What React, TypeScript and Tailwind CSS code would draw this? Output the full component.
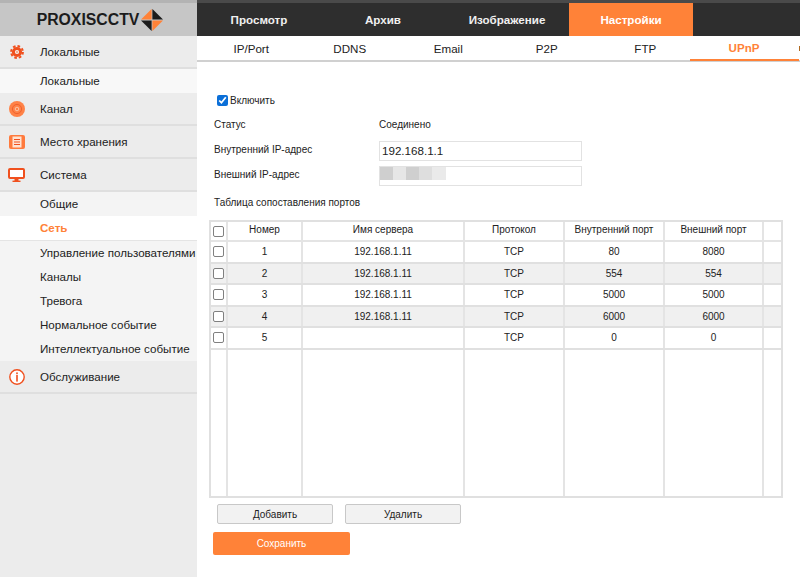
import React from 'react';

const font = 'font-["Liberation_Sans",Arial,sans-serif]';

const topTabs = ['Просмотр', 'Архив', 'Изображение', 'Настройки'];
const subTabs = ['IP/Port', 'DDNS', 'Email', 'P2P', 'FTP'];

const rows = [
  { id: 1, server: '192.168.1.11', inner: '80', outer: '8080' },
  { id: 2, server: '192.168.1.11', inner: '554', outer: '554' },
  { id: 3, server: '192.168.1.11', inner: '5000', outer: '5000' },
  { id: 4, server: '192.168.1.11', inner: '6000', outer: '6000' },
  { id: 5, server: '', inner: '0', outer: '0' },
];

function Logo() {
  return (
    <svg width="22" height="22" viewBox="0 0 22 22" className="ml-[2px] mt-[1px]">
      <polygon points="10.6,0 10.6,10.6 0,10.6" fill="#ff8238" />
      <polygon points="11.4,0 22,10.6 11.4,10.6" fill="#1c1c1c" />
      <polygon points="0,11.4 10.6,11.4 10.6,22" fill="#1c1c1c" />
      <polygon points="11.4,11.4 22,11.4 11.4,22" fill="#ff8238" />
    </svg>
  );
}

function GearIcon() {
  return (
    <svg width="14" height="14" viewBox="0 0 14 14">
      <circle cx="7" cy="7" r="3.6" fill="none" stroke="#f0501e" strokeWidth="3" />
      <circle cx="7" cy="7" r="5.9" fill="none" stroke="#f0501e" strokeWidth="2" strokeDasharray="2.6 2" />
      <circle cx="7" cy="7" r="1.7" fill="#f8e4da" />
      <circle cx="7" cy="7" r="0.7" fill="#f0501e" />
    </svg>
  );
}

function ChannelIcon() {
  return (
    <svg width="16" height="16" viewBox="0 0 16 16">
      <circle cx="8" cy="8" r="8" fill="#ff8247" />
      <circle cx="8" cy="8" r="4.6" fill="none" stroke="#f0622e" strokeWidth="1" />
      <circle cx="8" cy="8" r="1.8" fill="none" stroke="#f7d5c2" strokeWidth="0.8" />
    </svg>
  );
}

function StorageIcon() {
  return (
    <svg width="16" height="14" viewBox="0 0 16 14">
      <rect x="0" y="0" width="16" height="14" rx="2" fill="#ff7a3d" />
      <rect x="3.5" y="1.5" width="9" height="11" fill="#ffe3d2" />
      <path d="M5 4.5h6M5 7h6M5 9.5h6" stroke="#f0501e" strokeWidth="1" />
    </svg>
  );
}

function MonitorIcon() {
  return (
    <svg width="17" height="14" viewBox="0 0 17 14">
      <rect x="1" y="1" width="15" height="9" rx="1" fill="#fff" stroke="#f0501e" strokeWidth="2" />
      <rect x="6.5" y="11" width="4" height="2" fill="#f0501e" />
      <rect x="4.5" y="12.6" width="8" height="1.4" fill="#f0501e" />
    </svg>
  );
}

function InfoIcon() {
  return (
    <svg width="16" height="16" viewBox="0 0 16 16">
      <circle cx="8" cy="8" r="7.2" fill="#fff" stroke="#f0501e" strokeWidth="1.4" />
      <rect x="7.2" y="3.4" width="1.6" height="1.6" fill="#f0501e" />
      <rect x="7.2" y="5.8" width="1.6" height="6.8" fill="#f0501e" />
    </svg>
  );
}

function SectionItem({ icon, label, first }: { icon: React.ReactNode; label: string; first?: boolean }) {
  return (
    <div className={`flex h-[33px] items-center border-b-2 border-[#dfdfdf] bg-[#ececec] ${first ? 'pt-[1px]' : ''}`}>
      <div className="flex w-[40px] justify-center pr-[7px]">{icon}</div>
      <span className="text-[11.6px] text-[#222]">{label}</span>
    </div>
  );
}

function SubItem({ label, active }: { label: string; active?: boolean }) {
  return (
    <div
      className={`flex h-[24px] items-center pl-[40px] text-[11.6px] whitespace-nowrap ${
        active ? 'bg-white font-bold text-[#ff8238]' : 'text-[#222]'
      }`}
    >
      {label}
    </div>
  );
}

function Check() {
  return <span className="block h-[11px] w-[11px] rounded-[2px] border border-[#808080] bg-white" />;
}

function Field({ label, children }: { label: string; children: React.ReactNode }) {
  return (
    <div className="flex h-[25px] items-center">
      <span className="mt-[-2px] w-[165px] text-[10px] text-[#222]">{label}</span>
      {children}
    </div>
  );
}

export default function App() {
  const cols = 'grid grid-cols-[17px_75px_162px_100px_100px_99px_17px]';
  const cell = 'flex items-center justify-center border-r-2 border-[#e4e4e4] last:border-r-0';

  return (
    <div className={`flex h-[577px] w-[800px] overflow-hidden bg-white ${font}`}>
      <aside className="h-full w-[197px] shrink-0 bg-[#ececec]">
        <div className="flex h-[36px] items-center justify-center border-t-[3px] border-[#b3b3b3] bg-[#c6c6c6] pl-[3px]">
          <span className="text-[15.8px] font-bold leading-none text-[#1c1c1c]">PROXISCCTV</span>
          <Logo />
        </div>
        <SectionItem first icon={<GearIcon />} label="Локальные" />
        <div className="flex h-[24px] items-center bg-[#f8f8f8] pl-[40px] text-[11.6px] text-[#222]">Локальные</div>
        <SectionItem icon={<ChannelIcon />} label="Канал" />
        <SectionItem icon={<StorageIcon />} label="Место хранения" />
        <SectionItem icon={<MonitorIcon />} label="Система" />
        <div className="bg-[#f4f4f4]">
          <SubItem label="Общие" />
          <div className="border-b border-[#e4e4e4]">
            <SubItem label="Сеть" active />
          </div>
          <SubItem label="Управление пользователями" />
          <SubItem label="Каналы" />
          <SubItem label="Тревога" />
          <SubItem label="Нормальное событие" />
          <SubItem label="Интеллектуальное событие" />
        </div>
        <SectionItem icon={<InfoIcon />} label="Обслуживание" />
      </aside>

      <main className="min-w-0 flex-1">
        <nav className="flex h-[36px] border-t-[3px] border-[#4a4a4a] bg-[#2e2e2e]">
          {topTabs.map((t) => (
            <div
              key={t}
              className={`flex w-[124px] items-center justify-center text-[11.6px] font-bold ${
                t === 'Настройки' ? 'bg-[#ff8238] text-white' : 'text-[#f0f0f0]'
              }`}
            >
              {t}
            </div>
          ))}
        </nav>

        <div className="flex h-[26px] border-b-2 border-[#d0d0d0] pl-[5px]">
          {subTabs.map((t) => (
            <div key={t} className="flex w-[98.5px] shrink-0 items-center justify-center pt-[1px] text-[11.6px] text-[#222]">
              {t}
            </div>
          ))}
          <div className="mb-[-1px] ml-[-5px] flex w-[109px] shrink-0 items-center justify-center border-b-2 border-[#ff8238] pt-[1px] text-[11.6px] font-bold text-[#ff8238]">
            UPnP
          </div>
          <span className="mt-[10px] h-[5px] w-[2px] shrink-0 bg-[#b06a20]" />
        </div>

        <div className="px-[17px]">
          <label className="ml-[3px] mt-[31px] flex h-[14px] items-center gap-[2px] text-[10px] text-[#222]">
            <input type="checkbox" defaultChecked className="m-0 h-[11px] w-[11px] accent-[#0b6fd8]" />
            Включить
          </label>

          <div className="mt-[6px]">
            <Field label="Статус">
              <span className="mt-[-2px] text-[10px] text-[#222]">Соединено</span>
            </Field>
            <Field label="Внутренний IP-адрес">
              <div className="flex h-[20px] w-[203px] items-center border border-[#e2e2e2] pl-[2px] text-[11.6px] text-[#222]">
                192.168.1.1
              </div>
            </Field>
            <Field label="Внешний IP-адрес">
              <div className="h-[20px] w-[203px] border border-[#e2e2e2]">
                <div className="flex h-[13px] w-[66px]">
                  <span className="w-[13px] bg-[#cfcfcf]" />
                  <span className="w-[13px] bg-[#e6e6e6]" />
                  <span className="w-[13px] bg-[#cfcfcf]" />
                  <span className="w-[13px] bg-[#dedede]" />
                  <span className="w-[14px] bg-[#eaeaea]" />
                </div>
              </div>
            </Field>
          </div>

          <p className="mt-[8px] text-[10px] leading-[14px] text-[#222]">Таблица сопоставления портов</p>

          <div className="ml-[-5px] mt-[10px] flex h-[278px] w-[574px] flex-col border-2 border-[#e0e0e0] text-[10px] text-[#222]">
            <div className={`${cols} h-[20px] border-b-2 border-[#e4e4e4]`}>
              <div className={cell}><Check /></div>
              <div className={cell}><span className="mb-[3px]">Номер</span></div>
              <div className={cell}><span className="mb-[3px]">Имя сервера</span></div>
              <div className={cell}><span className="mb-[3px]">Протокол</span></div>
              <div className={cell}><span className="mb-[3px]">Внутренний порт</span></div>
              <div className={cell}><span className="mb-[3px]">Внешний порт</span></div>
              <div className={cell} />
            </div>
            {rows.map((r) => (
              <div
                key={r.id}
                className={`${cols} h-[21.5px] border-b-2 border-[#e0e0e0] ${r.id % 2 === 0 ? 'bg-[#f0f0f0]' : ''}`}
              >
                <div className={cell}><Check /></div>
                <div className={cell}>{r.id}</div>
                <div className={cell}>{r.server}</div>
                <div className={cell}>TCP</div>
                <div className={cell}>{r.inner}</div>
                <div className={cell}>{r.outer}</div>
                <div className={cell} />
              </div>
            ))}
            <div className={`${cols} flex-1`}>
              <div className={cell} />
              <div className={cell} />
              <div className={cell} />
              <div className={cell} />
              <div className={cell} />
              <div className={cell} />
              <div className={cell} />
            </div>
          </div>

          <div className="mt-[6px] flex gap-[12px] pl-[3px]">
            <button className="h-[20px] w-[116px] rounded-[2px] border border-[#c8c8c8] bg-[#f2f2f2] text-[10px] text-[#222]">
              Добавить
            </button>
            <button className="h-[20px] w-[116px] rounded-[2px] border border-[#c8c8c8] bg-[#f2f2f2] text-[10px] text-[#222]">
              Удалить
            </button>
          </div>
          <button className="ml-[-1px] mt-[8px] h-[23px] w-[137px] rounded-[2px] bg-[#ff8238] text-[10px] text-white">
            Сохранить
          </button>
        </div>
      </main>
    </div>
  );
}
